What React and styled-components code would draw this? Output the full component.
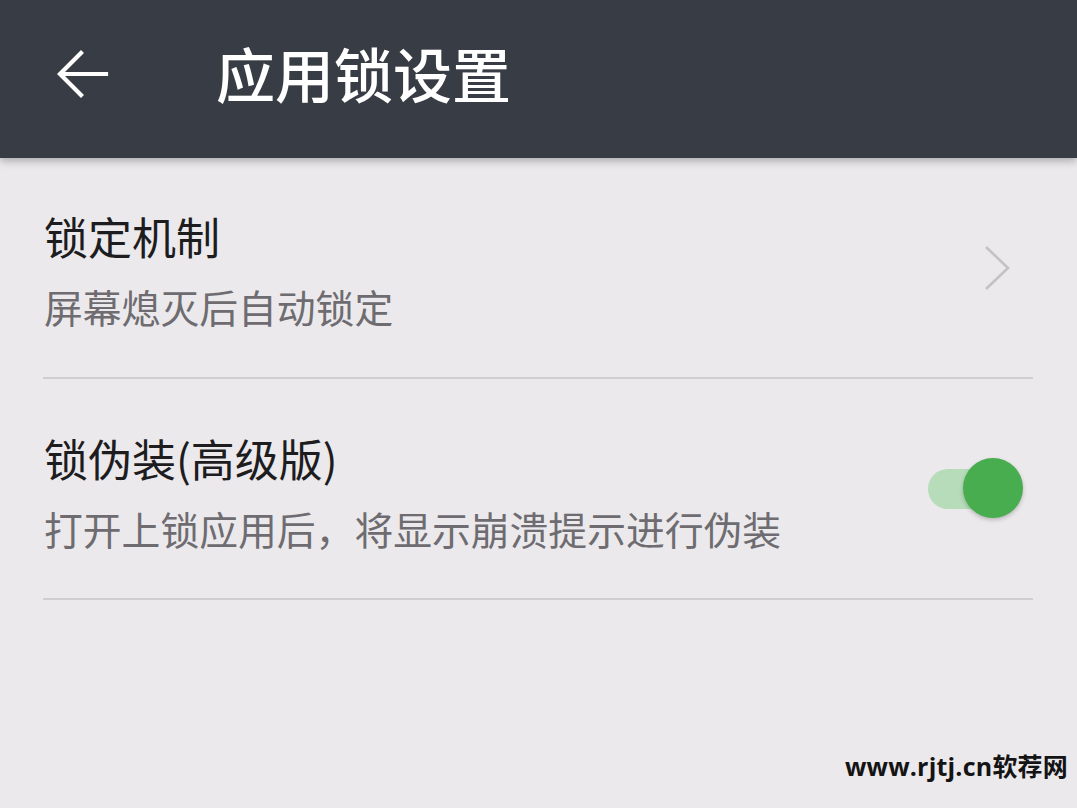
import React from "react";
import styled, { createGlobalStyle } from "styled-components";

const Global = createGlobalStyle`
  html, body { margin: 0; padding: 0; background: #ebe9ec; }
  body { font-family: "Noto Sans CJK SC", "Noto Sans", sans-serif; }
  * { box-sizing: border-box; }
`;

const Page = styled.div`
  position: relative;
  width: 1077px;
  height: 808px;
  background: #ebe9ec;
  overflow: hidden;
`;

const Header = styled.header`
  position: relative;
  z-index: 1;
  height: 158px;
  background: #383c44;
  display: flex;
  align-items: center;
  box-shadow: 0 3px 8px rgba(0, 0, 0, 0.28);
`;

const BackButton = styled.div`
  width: 216px;
  height: 158px;
  display: flex;
  align-items: center;
  padding-left: 55px;
  padding-bottom: 6px;
`;

const Title = styled.h1`
  margin: 0;
  color: #ffffff;
  font-size: 59px;
  font-weight: 500;
  line-height: 1;
  letter-spacing: 0;
  padding-bottom: 14px;
`;

const List = styled.div`
  margin: 0 44px 0 43px;
`;

const Row = styled.div`
  height: 221px;
  display: flex;
  align-items: center;
  justify-content: space-between;
  border-bottom: 2px solid #cfcdd0;
`;

const TextBlock = styled.div`
  align-self: flex-start;
  display: flex;
  flex-direction: column;
  padding-top: ${(p) => p.$top}px;
`;

const ItemTitle = styled.div`
  font-size: 44px;
  line-height: 44px;
  color: #1d1c1e;
  margin-left: 1px;
`;

const ItemSub = styled.div`
  font-size: 38.8px;
  line-height: 40px;
  color: #6e6c70;
  margin-top: 28px;
  margin-left: 1px;
`;

const Trailing = styled.div`
  display: flex;
  align-items: center;
  margin-right: ${(p) => p.$right}px;
`;

const Switch = styled.div`
  position: relative;
  width: 95px;
  height: 62px;
  display: flex;
  align-items: center;
`;

const Track = styled.div`
  width: 80px;
  height: 40px;
  border-radius: 20px;
  background: #b6dcb9;
`;

const Thumb = styled.div`
  position: absolute;
  right: 0;
  top: 0;
  width: 60px;
  height: 60px;
  border-radius: 50%;
  background: #47ad4f;
  box-shadow: 0 2px 4px rgba(0, 0, 0, 0.22);
`;

const Watermark = styled.div`
  position: absolute;
  right: 9px;
  bottom: 29px;
  font-family: "Open Sans", "Noto Sans CJK SC", sans-serif;
  font-weight: 700;
  font-size: 25px;
  line-height: 1;
  color: #141414;
  letter-spacing: 0.2px;
`;

function BackArrow() {
  return (
    <svg width="54" height="54" viewBox="0 0 54 54" fill="none">
      <path
        d="M51 25H6 M26 4L5 25L26 46"
        stroke="#ffffff"
        strokeWidth="4.2"
        strokeLinecap="square"
      />
    </svg>
  );
}

function Chevron() {
  return (
    <svg width="30" height="48" viewBox="0 0 30 48" fill="none">
      <path d="M3 3L25 24L3 45" stroke="#c4c2c5" strokeWidth="2.6" />
    </svg>
  );
}

export default function App() {
  return (
    <Page>
      <Global />
      <Header>
        <BackButton>
          <BackArrow />
        </BackButton>
        <Title>应用锁设置</Title>
      </Header>
      <List>
        <Row>
          <TextBlock $top={56}>
            <ItemTitle>锁定机制</ItemTitle>
            <ItemSub>屏幕熄灭后自动锁定</ItemSub>
          </TextBlock>
          <Trailing $right={20}>
            <Chevron />
          </Trailing>
        </Row>
        <Row>
          <TextBlock $top={57}>
            <ItemTitle>锁伪装(高级版)</ItemTitle>
            <ItemSub>打开上锁应用后，将显示崩溃提示进行伪装</ItemSub>
          </TextBlock>
          <Trailing $right={10}>
            <Switch>
              <Track />
              <Thumb />
            </Switch>
          </Trailing>
        </Row>
      </List>
      <Watermark>www.rjtj.cn软荐网</Watermark>
    </Page>
  );
}
